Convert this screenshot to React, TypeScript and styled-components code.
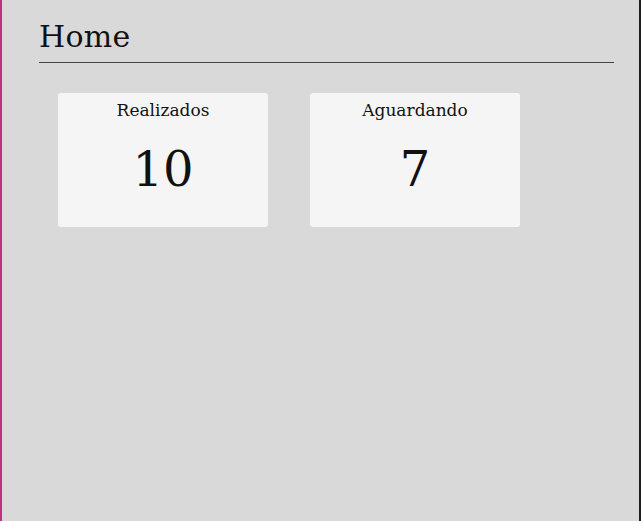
import React from 'react';
import styled, { createGlobalStyle } from 'styled-components';

const GlobalStyle = createGlobalStyle`
  html, body {
    margin: 0;
    padding: 0;
    height: 100%;
  }
  #root {
    height: 100%;
  }
  body {
    font-family: 'DejaVu Serif', 'Liberation Serif', serif;
    color: #111;
  }
`;

const stats = [
  { label: 'Realizados', value: 10 },
  { label: 'Aguardando', value: 7 },
];

export default function App() {
  return (
    <>
      <GlobalStyle />
      <Page>
        <Header>
          <Title>Home</Title>
        </Header>
        <CardRow>
          {stats.map((s) => (
            <Card key={s.label}>
              <CardLabel>{s.label}</CardLabel>
              <CardValue>{s.value}</CardValue>
            </Card>
          ))}
        </CardRow>
      </Page>
    </>
  );
}

const Page = styled.div`
  box-sizing: border-box;
  height: 100%;
  background-color: #d9d9d9;
  border-left: 2px solid #c2307a;
  border-right: 2px solid #1c1c1c;
  padding: 0 25px 0 37px;
  display: flex;
  flex-direction: column;
`;

const Header = styled.div`
  box-sizing: border-box;
  height: 63px;
  padding-top: 20px;
  border-bottom: 1px solid #444;
`;

const Title = styled.h1`
  margin: 0;
  font-size: 30px;
  font-weight: normal;
  line-height: 34px;
  letter-spacing: 0.3px;
`;

const CardRow = styled.div`
  display: flex;
  gap: 42px;
  margin-top: 30px;
  padding-left: 19px;
`;

const Card = styled.div`
  width: 210px;
  height: 134px;
  background-color: #f5f5f5;
  border-radius: 3px;
  display: flex;
  flex-direction: column;
  align-items: center;
`;

const CardLabel = styled.div`
  margin-top: 6px;
  font-size: 17px;
  line-height: 22px;
`;

const CardValue = styled.div`
  margin-top: 20px;
  font-size: 48px;
  line-height: 56px;
`;
